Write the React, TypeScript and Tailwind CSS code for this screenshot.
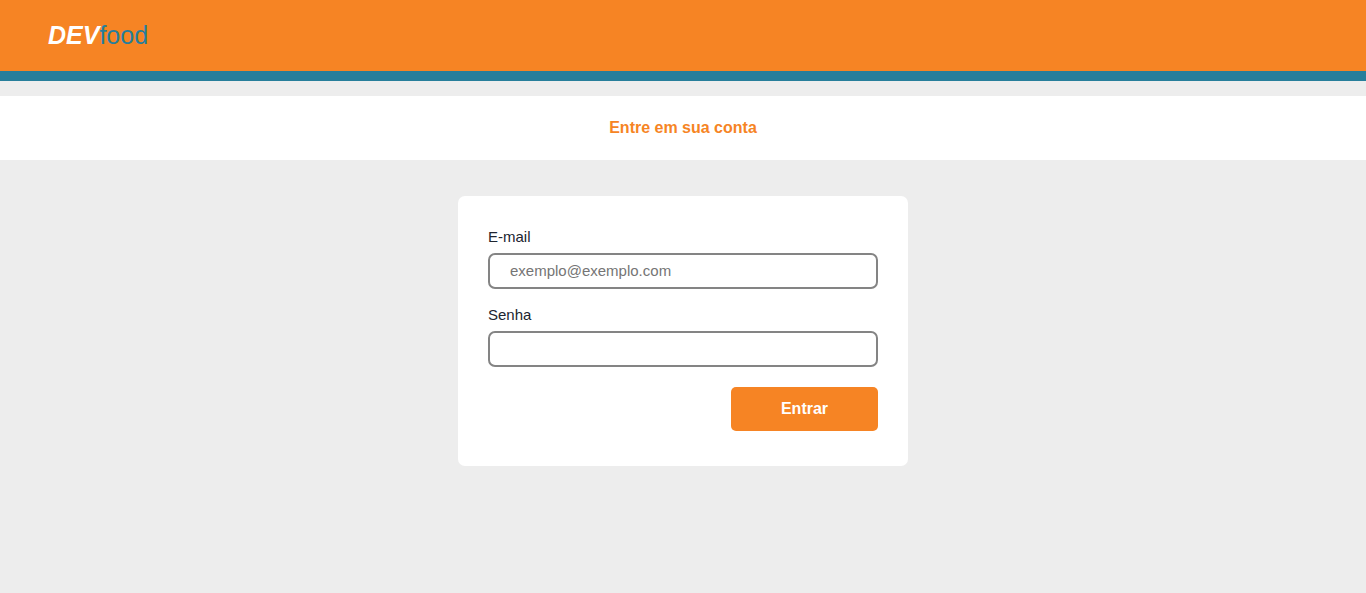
import React from "react";

function Field({ id, label, type, placeholder }: { id: string; label: string; type: string; placeholder?: string }) {
  return (
    <div className="flex flex-col">
      <label htmlFor={id} className="text-[15px] leading-[17px] text-[#202530]">
        {label}
      </label>
      <input
        id={id}
        type={type}
        placeholder={placeholder}
        className="mt-2 h-9 w-full rounded-[7px] border-2 border-[#848484] bg-white px-5 pb-px text-[15px] leading-[17px] text-[#202530] outline-none placeholder:text-[#757575]"
      />
    </div>
  );
}

export default function App() {
  return (
    <div className="flex min-h-screen flex-col bg-[#ededed] font-['Liberation_Sans',Arial,sans-serif]">
      <header className="flex h-[81px] items-center border-b-10 border-[#267e9b] bg-[#f68424] px-12">
        <h1 className="text-[25px] leading-[29px] text-[#267e9b]">
          <span className="font-bold italic text-white">DEV</span>food
        </h1>
      </header>
      <div className="mt-[15px] flex h-16 items-center justify-center bg-white">
        <h2 className="text-base font-bold text-[#f68424]">Entre em sua conta</h2>
      </div>
      <form className="mx-auto mt-9 flex h-[270px] w-[450px] flex-col gap-[17px] rounded-[7px] bg-white px-[30px] pt-8">
        <Field id="email" label="E-mail" type="email" placeholder="exemplo@exemplo.com" />
        <Field id="password" label="Senha" type="password" />
        <button type="button" className="mt-[3px] h-11 w-[147px] self-end rounded-[5px] bg-[#f68424] text-base font-bold text-white">
          Entrar
        </button>
      </form>
    </div>
  );
}
